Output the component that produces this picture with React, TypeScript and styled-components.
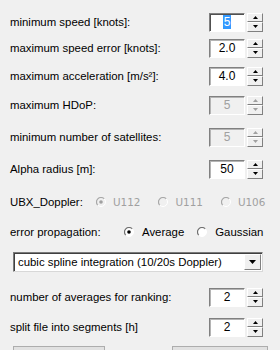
import React from 'react';
import styled, { createGlobalStyle } from 'styled-components';

const GlobalStyle = createGlobalStyle`
  html, body {
    margin: 0;
    padding: 0;
    background: #f0f0f0;
    overflow: hidden;
  }
  body {
    font-family: "Liberation Sans", Arial, sans-serif;
    font-size: 11.4px;
    color: #000;
  }
`;

const Panel = styled.div`
  display: flex;
  flex-direction: column;
  padding: 9px 17px 0 10px;
  width: 280px;
  height: 350px;
  box-sizing: border-box;
  overflow: hidden;
`;

const Row = styled.div<{ $h: number }>`
  display: flex;
  align-items: center;
  justify-content: space-between;
  height: ${p => p.$h}px;
  flex: 0 0 auto;
`;

const Label = styled.span`
  white-space: nowrap;
  color: #000;
`;

const SpinWrap = styled.div`
  display: flex;
  gap: 2px;
  width: 54px;
  height: 19px;
`;

const Field = styled.div<{ $disabled?: boolean; $focused?: boolean }>`
  width: 36px;
  height: 19px;
  box-sizing: border-box;
  border: 1px solid;
  border-color: #808080 #ffffff #ffffff #808080;
  box-shadow: ${p => (p.$focused ? 'inset 1px 1px 0 #505050' : 'inset 1px 1px 0 #b4b4b4')};
  background: ${p => (p.$disabled ? '#f0f0f0' : '#ffffff')};
  color: ${p => (p.$disabled ? '#a0a0a0' : '#000')};
  display: flex;
  align-items: center;
  justify-content: center;
  font-size: 12px;
`;

const Selected = styled.span`
  background: #3399ff;
  color: #fff;
  padding: 0 1px;
  line-height: 14px;
`;

const SpinButtons = styled.div`
  display: flex;
  flex-direction: column;
  width: 16px;
  height: 19px;
`;

const SpinHalf = styled.div`
  flex: 1;
  box-sizing: border-box;
  border: 1px solid;
  border-color: #ffffff #808080 #808080 #ffffff;
  background: #f0f0f0;
  display: flex;
  align-items: center;
  justify-content: center;
`;

const RadioLabel = styled.span<{ $w: number }>`
  width: ${p => p.$w}px;
  flex: 0 0 auto;
  white-space: nowrap;
`;

const RadioRow = styled.div<{ $h: number }>`
  display: flex;
  align-items: center;
  height: ${p => p.$h}px;
  flex: 0 0 auto;
`;

const RadioGroup = styled.div<{ $gap: number }>`
  display: flex;
  align-items: center;
  gap: ${p => p.$gap}px;
`;

const RadioItem = styled.label<{ $disabled?: boolean }>`
  display: flex;
  align-items: center;
  gap: ${p => (p.$disabled ? 7 : 8)}px;
  color: ${p => (p.$disabled ? '#a0a0a0' : '#000')};
  font-family: ${p => (p.$disabled ? '"DejaVu Sans", Verdana, sans-serif' : 'inherit')};
  font-size: ${p => (p.$disabled ? '10.4px' : 'inherit')};
  white-space: nowrap;
`;

const ComboRow = styled.div<{ $h: number }>`
  display: flex;
  align-items: center;
  height: ${p => p.$h}px;
  flex: 0 0 auto;
`;

const Combo = styled.div`
  width: 255px;
  height: 20px;
  margin-left: 3px;
  box-sizing: border-box;
  border: 1px solid;
  border-color: #7a7a7a #d8d8d8 #d8d8d8 #7a7a7a;
  box-shadow: inset 1px 1px 0 #404040;
  background: #fff;
  display: flex;
  align-items: center;
  justify-content: space-between;
  padding: 0 1px 0 4px;
  white-space: nowrap;
`;

const ComboButton = styled.div`
  width: 17px;
  height: 16px;
  box-sizing: border-box;
  border: 1px solid;
  border-color: #ffffff #808080 #808080 #ffffff;
  background: #f0f0f0;
  display: flex;
  align-items: center;
  justify-content: center;
`;

const ButtonRow = styled.div`
  display: flex;
  justify-content: space-between;
  width: 255px;
  margin: 5px 0 0 3px;
  flex: 0 0 auto;
`;

const PushButton = styled.button<{ $w: number }>`
  width: ${p => p.$w}px;
  height: 23px;
  border: 1px solid #adadad;
  background: #e1e1e1;
  padding: 0;
`;

const Arrow = ({ up, color = '#000' }: { up?: boolean; color?: string }) => (
  <svg width="5" height="3" viewBox="0 0 5 3">
    <path d={up ? 'M0 3 L5 3 L2.5 0 Z' : 'M0 0 L5 0 L2.5 3 Z'} fill={color} />
  </svg>
);

const Spinner = ({
  value,
  disabled,
  focused,
}: {
  value: string;
  disabled?: boolean;
  focused?: boolean;
}) => (
  <SpinWrap>
    <Field $disabled={disabled} $focused={focused}>
      {focused ? <Selected>{value}</Selected> : value}
    </Field>
    <SpinButtons>
      <SpinHalf>
        <Arrow up color={disabled ? '#a0a0a0' : '#000'} />
      </SpinHalf>
      <SpinHalf>
        <Arrow color={disabled ? '#a0a0a0' : '#000'} />
      </SpinHalf>
    </SpinButtons>
  </SpinWrap>
);

const Radio = ({ checked, disabled }: { checked?: boolean; disabled?: boolean }) => (
  <svg width="10" height="10" viewBox="0 0 10 10">
    <circle cx="5" cy="5" r="4.5" fill={disabled ? '#f0f0f0' : '#fff'} />
    <path d="M1.8 8.2 A4.5 4.5 0 0 1 8.2 1.8" fill="none" stroke={disabled ? '#a8a8a8' : '#707070'} strokeWidth="1.2" />
    <path d="M8.2 1.8 A4.5 4.5 0 0 1 1.8 8.2" fill="none" stroke="#ffffff" strokeWidth="1" />
    {checked && <circle cx="5" cy="5" r="1.8" fill={disabled ? '#a0a0a0' : '#000'} />}
  </svg>
);

const spinRows: { label: string; value: string; h: number; disabled?: boolean; focused?: boolean }[] = [
  { label: 'minimum speed [knots]:', value: '5', h: 26, focused: true },
  { label: 'maximum speed error [knots]:', value: '2.0', h: 26 },
  { label: 'maximum acceleration [m/s\u00b2]:', value: '4.0', h: 30 },
  { label: 'maximum HDoP:', value: '5', h: 28, disabled: true },
  { label: 'minimum number of satellites:', value: '5', h: 36, disabled: true },
  { label: 'Alpha radius [m]:', value: '50', h: 28 },
];

export default function App() {
  return (
    <>
      <GlobalStyle />
      <Panel>
        {spinRows.map(r => (
          <Row key={r.label} $h={r.h}>
            <Label>{r.label}</Label>
            <Spinner value={r.value} disabled={r.disabled} focused={r.focused} />
          </Row>
        ))}

        <RadioRow $h={38}>
          <RadioLabel $w={86}>UBX_Doppler:</RadioLabel>
          <RadioGroup $gap={18}>
            <RadioItem $disabled>
              <Radio checked disabled />
              U112
            </RadioItem>
            <RadioItem $disabled>
              <Radio disabled />
              U111
            </RadioItem>
            <RadioItem $disabled>
              <Radio disabled />
              U106
            </RadioItem>
          </RadioGroup>
        </RadioRow>

        <RadioRow $h={22}>
          <RadioLabel $w={114}>error propagation:</RadioLabel>
          <RadioGroup $gap={13}>
            <RadioItem>
              <Radio checked />
              Average
            </RadioItem>
            <RadioItem>
              <Radio />
              Gaussian
            </RadioItem>
          </RadioGroup>
        </RadioRow>

        <ComboRow $h={38}>
          <Combo>
            <span>cubic spline integration (10/20s Doppler)</span>
            <ComboButton>
              <svg width="7" height="4" viewBox="0 0 7 4">
                <path d="M0 0 L7 0 L3.5 4 Z" fill="#000" />
              </svg>
            </ComboButton>
          </Combo>
        </ComboRow>

        <Row $h={32}>
          <Label>number of averages for ranking:</Label>
          <Spinner value="2" />
        </Row>
        <Row $h={28}>
          <Label>split file into segments [h]</Label>
          <Spinner value="2" />
        </Row>

        <ButtonRow>
          <PushButton $w={92} aria-label="left" />
          <PushButton $w={96} aria-label="right" />
        </ButtonRow>
      </Panel>
    </>
  );
}
